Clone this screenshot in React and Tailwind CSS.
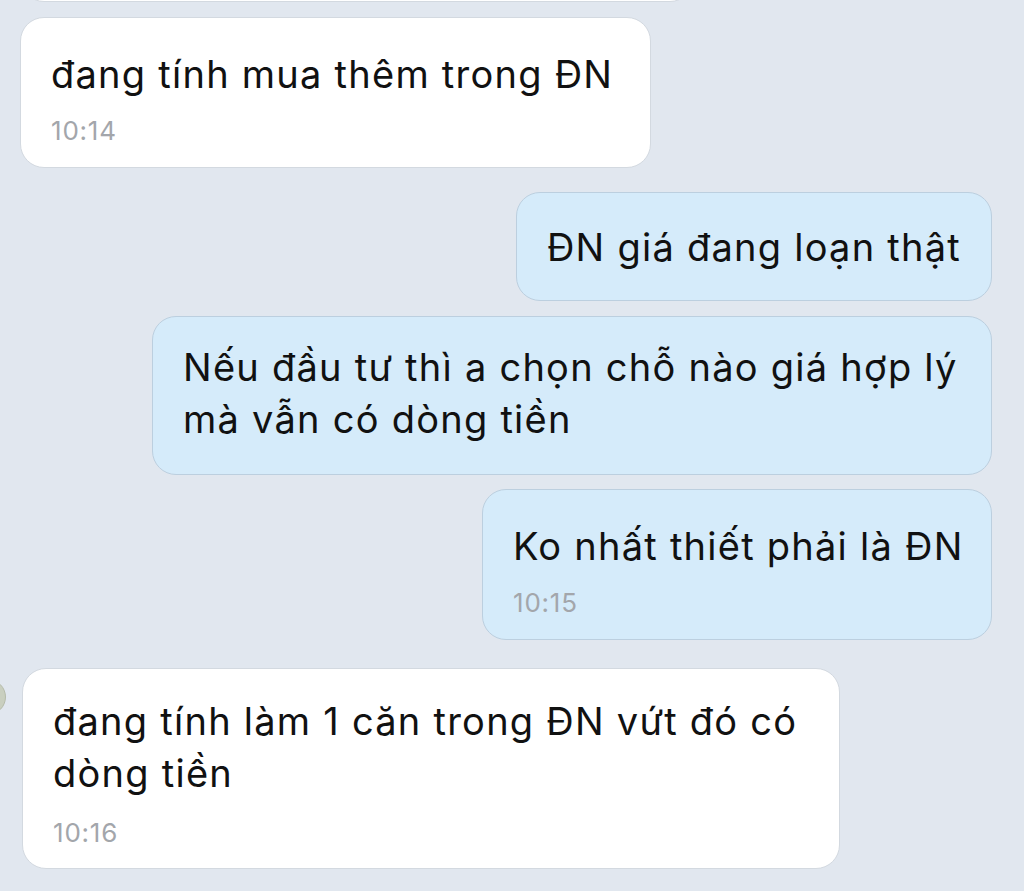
import React from "react";

const font = { fontFamily: '"Inter", "Noto Sans", "Liberation Sans", sans-serif' };

function Bubble({ mine, className = "", lines, time }) {
  const tone = mine
    ? "bg-[#d5ebfa] border-[#bccfdf]"
    : "bg-white border-[#d3d9e0]";
  return (
    <div className={`rounded-[24px] border-[1.5px] px-[30px] ${tone} ${className}`}>
      <div className="text-[38px] leading-[52px] text-[#111111] tracking-[1.25px]">
        {lines.map((l, i) => (
          <div key={i} className="whitespace-nowrap">{l}</div>
        ))}
      </div>
      {time && (
        <div className="text-[26px] leading-[30px] tracking-[0.8px] text-[#a3a6ab]">{time}</div>
      )}
    </div>
  );
}

export default function App() {
  return (
    <div
      className="relative h-[891px] w-[1024px] overflow-hidden bg-[#e1e7ef]"
      style={font}
    >
      {/* sender avatar peeking in from the left edge */}
      <div className="absolute left-[-30px] top-[679px] h-[36px] w-[36px] rounded-full bg-[#c9cfbf] border border-[#b5bba9]" />

      <div className="flex flex-col">
        {/* tail of the previous message, scrolled off the top */}
        <div className="ml-[20px] -mt-[60px] h-[62px] w-[674px] rounded-[24px] border-[1.5px] border-[#d3d9e0] bg-white" />

        <div className="mt-[15px] flex">
          <Bubble
            className="ml-[20px] w-[631px] pt-[30px] pb-[21px]"
            lines={["đang tính mua thêm trong ĐN"]}
            time={<div className="mt-[16px]">10:14</div>}
          />
        </div>

        <div className="mt-[24px] flex justify-end pr-[32px]">
          <Bubble
            mine
            className="pt-[28px] pb-[27px]"
            lines={["ĐN giá đang loạn thật"]}
          />
        </div>

        <div className="mt-[15px] flex justify-end pr-[32px]">
          <Bubble
            mine
            className="w-[840px] pt-[24px] pb-[29px]"
            lines={["Nếu đầu tư thì a chọn chỗ nào giá hợp lý", "mà vẫn có dòng tiền"]}
          />
        </div>

        <div className="mt-[14px] flex justify-end pr-[32px]">
          <Bubble
            mine
            className="w-[510px] pt-[30px] pb-[21px]"
            lines={["Ko nhất thiết phải là ĐN"]}
            time={<div className="mt-[16px]">10:15</div>}
          />
        </div>

        <div className="mt-[28px] flex">
          <Bubble
            className="ml-[22px] w-[818px] pt-[26px] pb-[20px]"
            lines={["đang tính làm 1 căn trong ĐN vứt đó có", "dòng tiền"]}
            time={<div className="mt-[19px]">10:16</div>}
          />
        </div>
      </div>
    </div>
  );
}
